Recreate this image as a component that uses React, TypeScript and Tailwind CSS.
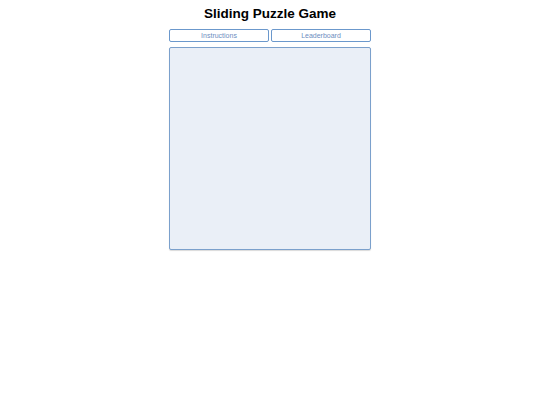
export default function App() {
  return (
    <div className="flex flex-col items-center bg-white min-h-[405px] font-['Liberation_Sans',Arial,sans-serif]">
      <h1 className="mt-[5px] text-[13.5px] leading-[18px] font-bold text-black">Sliding Puzzle Game</h1>
      <div className="mt-[6px] flex gap-[2px] w-[202px]">
        <button className="flex-1 h-[13px] rounded-[2px] border border-[#6b98cc] bg-white text-[7px] leading-none text-[#6d8dc0]">
          Instructions
        </button>
        <button className="flex-1 h-[13px] rounded-[2px] border border-[#6b98cc] bg-white text-[7px] leading-none text-[#6d8dc0]">
          Leaderboard
        </button>
      </div>
      <div className="mt-[5px] w-[202px] h-[203px] rounded-[2px] border border-[#7ba0cc] bg-[#eaeff7] shadow-[0_1px_1px_rgba(0,0,0,0.15)]" />
    </div>
  );
}
